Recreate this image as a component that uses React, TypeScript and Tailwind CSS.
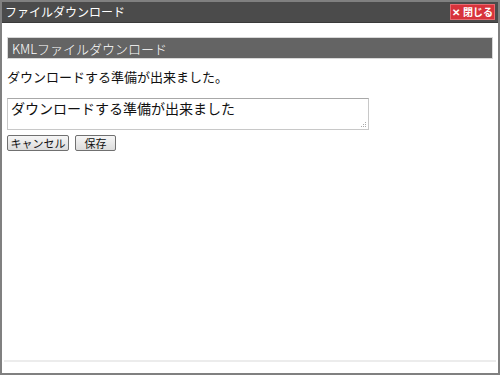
export default function App() {
  const font = { fontFamily: '"Noto Sans CJK JP", "Liberation Sans", sans-serif' };
  return (
    <div className="w-[500px] h-[375px] border-2 border-[#808080] bg-white flex flex-col" style={font}>
      <div className="h-[21px] bg-[#4b4b4b] border-b border-[#3a3a3a] flex items-center justify-between pl-[3px] pr-[3px]">
        <span className="text-white text-[12px] leading-none">ファイルダウンロード</span>
        <button className="h-[16px] w-[45px] justify-center bg-[#d8333b] border border-[#e56a70] text-white text-[10px] font-bold leading-none flex items-center gap-[3px]">
          <span>✕</span><span>閉じる</span>
        </button>
      </div>
      <div className="flex-1 flex flex-col px-[5px] pt-[14px]">
        <div className="h-[22px] bg-[#646464] border border-[#d8d8d8] flex items-center pl-[4px] text-white text-[13px] leading-none font-light">
          KMLファイルダウンロード
        </div>
        <div className="mt-[9px] text-[13px] text-[#111] leading-[18px]">ダウンロードする準備が出来ました。</div>
        <div className="mt-[12px] w-[362px] h-[32px] border border-[#c8c8c8] border-t-[#a8a8a8] relative px-[3px] text-[14px] leading-[18px] text-[#111]">
          ダウンロードする準備が出来ました
          <svg className="absolute right-[1px] bottom-[1px]" width="7" height="7" viewBox="0 0 7 7">
            <rect x="5" y="1" width="1" height="1" fill="#aaa" />
            <rect x="3" y="3" width="1" height="1" fill="#aaa" />
            <rect x="5" y="3" width="1" height="1" fill="#aaa" />
            <rect x="1" y="5" width="1" height="1" fill="#aaa" />
            <rect x="3" y="5" width="1" height="1" fill="#aaa" />
            <rect x="5" y="5" width="1" height="1" fill="#aaa" />
          </svg>
        </div>
        <div className="mt-[5px] flex gap-[6px]">
          <button className="h-[16px] w-[62px] border border-[#707070] rounded-[2px] bg-gradient-to-b from-[#f6f6f6] to-[#dcdcdc] text-[11px] leading-none text-[#111]">キャンセル</button>
          <button className="h-[16px] w-[41px] border border-[#707070] rounded-[2px] bg-gradient-to-b from-[#f6f6f6] to-[#dcdcdc] text-[11px] leading-none text-[#111]">保存</button>
        </div>
        <div className="flex-1" />
        <div className="h-[2px] bg-[#ececec] -mx-[3px] mb-[11px]" />
      </div>
    </div>
  );
}
